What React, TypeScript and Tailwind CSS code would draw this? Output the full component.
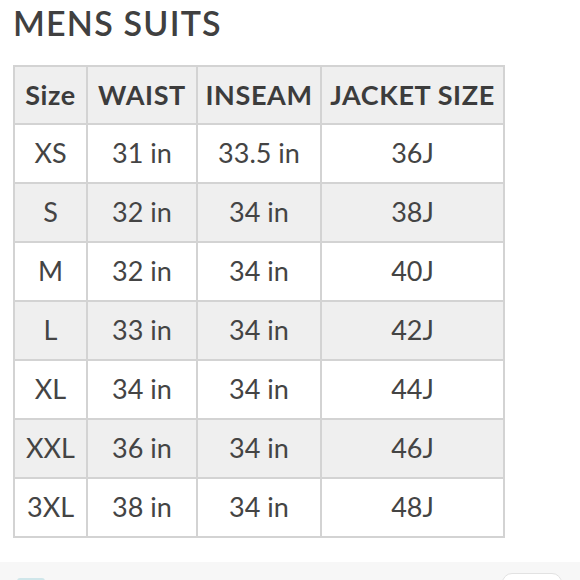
import React from "react";

const rows = [
  ["XS", "31 in", "33.5 in", "36J"],
  ["S", "32 in", "34 in", "38J"],
  ["M", "32 in", "34 in", "40J"],
  ["L", "33 in", "34 in", "42J"],
  ["XL", "34 in", "34 in", "44J"],
  ["XXL", "36 in", "34 in", "46J"],
  ["3XL", "38 in", "34 in", "48J"],
];

const headers = ["Size", "WAIST", "INSEAM", "JACKET SIZE"];

export default function App() {
  return (
    <div className="w-[580px] h-[580px] overflow-hidden bg-white flex flex-col text-[#444]" style={{ fontFamily: "Lato, 'Open Sans', sans-serif" }}>
      <div className="px-[13px] pt-[3px]">
        <h1 className="text-[34px] leading-[40px] font-semibold tracking-[1.2px] text-[#404040]">MENS SUITS</h1>
      </div>

      <div className="px-[13px] mt-[22px]">
        <table className="border-collapse border-2 border-[#d3d3d3] text-[27px]">
          <colgroup>
            <col className="w-[73px]" />
            <col className="w-[110px]" />
            <col className="w-[124px]" />
            <col className="w-[183px]" />
          </colgroup>
          <thead>
            <tr className="h-[58px] bg-[#efefef]">
              {headers.map(h => (
                <th key={h} className="border-2 border-[#d3d3d3] px-1 font-bold tracking-[0.6px] text-[#3c3c3c] whitespace-nowrap">{h}</th>
              ))}
            </tr>
          </thead>
          <tbody>
            {rows.map((r, i) => (
              <tr key={r[0]} className={`h-[59px] ${i % 2 === 1 ? "bg-[#efefef]" : "bg-white"}`}>
                {r.map((c, j) => (
                  <td key={j} className="border-2 border-[#d3d3d3] px-1 text-center text-[#444] whitespace-nowrap">{c}</td>
                ))}
              </tr>
            ))}
          </tbody>
        </table>
      </div>

      <div className="mt-[24px] flex-1 bg-[#f7f7f7] relative">
        <div className="absolute left-[17px] top-[16px] w-[28px] h-[8px] rounded-[3px] bg-[#cfe6ea]" />
        <div className="absolute left-[502px] top-[11px] w-[60px] h-[20px] rounded-[10px] border border-[#e2e2e2] bg-white" />
      </div>
    </div>
  );
}
